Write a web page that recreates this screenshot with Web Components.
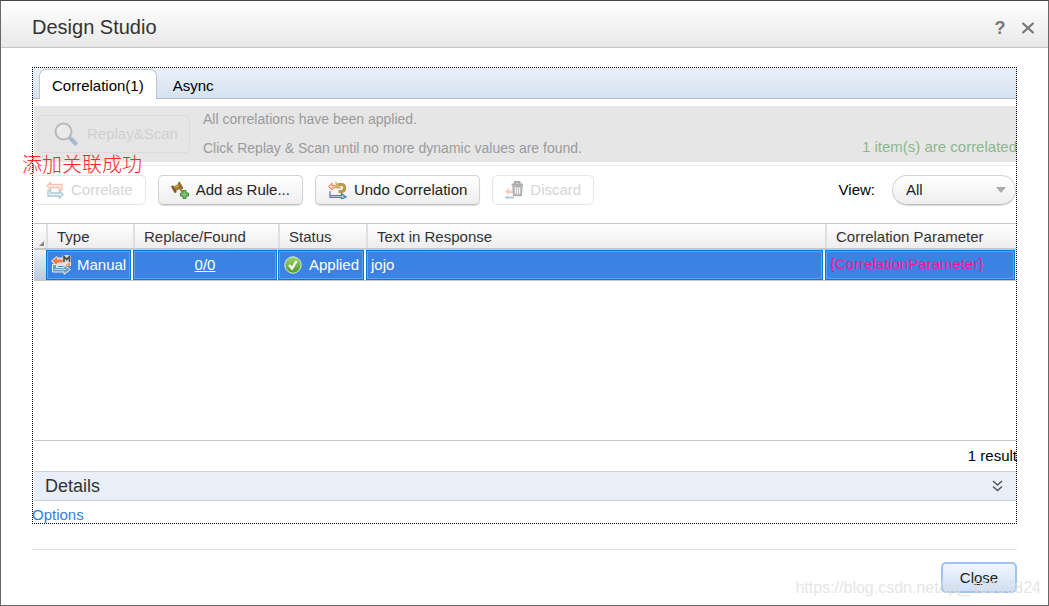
<!DOCTYPE html>
<html lang="en">
<head>
<meta charset="utf-8">
<title>Design Studio</title>
<style>
html{height:100%}
body{margin:0;min-height:100%;display:flex;flex-direction:column;font:15px/20px "Liberation Sans",Arial,sans-serif;color:#000;background:#fff}
ds-dialog{flex:1}
</style>
</head>
<body>
<ds-dialog heading="Design Studio">
  <ds-panel>
    <ds-tabs slot="tabs"></ds-tabs>
    <ds-banner></ds-banner>
    <ds-toolbar>
      <ds-button icon="correlate" disabled>Correlate</ds-button>
      <ds-button icon="rule">Add as Rule...</ds-button>
      <ds-button icon="undo">Undo Correlation</ds-button>
      <ds-button icon="discard" disabled>Discard</ds-button>
      <ds-view slot="end"></ds-view>
    </ds-toolbar>
    <ds-grid></ds-grid>
    <ds-details>Details</ds-details>
    <ds-options></ds-options>
  </ds-panel>
  <ds-note slot="note">添加关联成功</ds-note>
  <ds-button slot="actions" primary>Cl<u>o</u>se</ds-button>
  <ds-watermark slot="mark">https://blog.csdn.net/qq_40955824</ds-watermark>
</ds-dialog>

<script>
const define = (name, html, setup) => {
  const tpl = document.createElement('template');
  tpl.innerHTML = html;
  customElements.define(name, class extends HTMLElement {
    constructor() {
      super();
      this.attachShadow({mode: 'open'}).append(tpl.content.cloneNode(true));
    }
    connectedCallback() { if (setup) setup(this, this.shadowRoot); }
  });
};

const icons = {
  correlate: `<svg width="18" height="18" viewBox="0 0 18 18"><path d="M1 5 4.500 1.500V3.500H16V9H13.500V6.500H4.500v2z" fill="#fde3d4" stroke="#ee6a2c" stroke-width="1.300"/><path d="M17 13.500 13.500 17V15H2V9.500H4.500V12h9v-2z" fill="#d5e6ee" stroke="#2f7fa5" stroke-width="1.300"/></svg>`,
  rule: `<svg width="18" height="18" viewBox="0 0 18 18"><path d="M8.500 7l3 4" stroke="#a07c3c" stroke-width="2"/><g transform="rotate(-28 6 6)"><rect x="2.500" y="4" width="7" height="5" fill="#a37b34"/><rect x="1" y="2.500" width="2.500" height="8" rx="1" fill="#7f5c22"/><rect x="8.500" y="2.500" width="2.500" height="8" rx="1" fill="#8f6b2c"/><path d="M3.500 5.500h5" stroke="#cfae6c"/></g><path d="M12 9.500h3v2.500h2.500v3H15v2.500h-3V15H9.500v-3H12z" fill="#7fc268" stroke="#3b8a38" stroke-width="1"/></svg>`,
  undo: `<svg width="19" height="18" viewBox="0 0 19 18"><path d="M.5 5.500 4 2v2.500h3V7H4v2z" fill="#fbd3c0" stroke="#f0804c"/><path d="M2 10v4.500h11.500v-2l4.500 3.500-4.500 2v-1.500H2z" fill="#a9cbdc" stroke="#3f86a8" stroke-width="1.200"/><path d="M10 3.500h3.500c4 0 4.500 6.500 0 7H10.500" fill="none" stroke="#b89a4c" stroke-width="3"/><path d="M7.500 0v7.500h6z" fill="#cdb26c"/></svg>`,
  discard: `<svg width="18" height="18" viewBox="0 0 18 18"><path d="M0 10.500 4 7v2.500h4v2.500H4v2.500z" fill="#f28a58"/><path d="M1.500 15v1.500H9" fill="none" stroke="#3f86a8" stroke-width="2"/><path d="M6.500 3.500H18M10 3V1h4.500v2" fill="none" stroke="#333" stroke-width="2"/><path d="M8 5h9l-.8 9.500H8.800z" fill="#777" stroke="#333" stroke-width="1.400"/><path d="M10.500 6.500v6M12.500 6.500v6M14.500 6.500v6" stroke="#ddd"/></svg>`,
  search: `<svg width="26" height="26" viewBox="0 0 26 26"><path d="M17 17l5.500 5.500" stroke="#4b77a8" stroke-width="4" stroke-linecap="round"/><circle cx="10.500" cy="10.500" r="8" fill="#f2f2f2" stroke="#777" stroke-width="2"/><path d="M5.500 10a6 6 0 0 1 5-5" fill="none" stroke="#fff" stroke-width="2"/></svg>`,
  manual: `<svg width="20" height="20" viewBox="0 0 20 20"><path d="M0 6 5.500 1 7 2.500h13V11H7v1H5.500z" fill="#e6dfdc"/><path d="M1.500 6 6 2V4.500h6V7.500H6v3z" fill="#ef7a41"/><path d="M1.500 9.500v7.500H13v2.500l6.500-5L13 10v2.500H5.500v-3z" fill="#6f9fba" stroke="#e4edf2"/><path d="M3.500 14.500H15" stroke="#b4d3e0"/><rect x="11.500" y="0" width="8.500" height="7.500" fill="#d9d5d2"/><path d="M13 7V1.500l2.800 3 2.700-3V7" fill="none" stroke="#4a4a4a" stroke-width="1.600"/><path d="M18 8v2.500h-3" fill="none" stroke="#f29a68" stroke-width="2"/></svg>`,
  check: `<svg width="18" height="18" viewBox="0 0 18 18"><defs><linearGradient id="g" x2="0" y2="1"><stop stop-color="#a0d26c"/><stop offset="1" stop-color="#4f9a2d"/></linearGradient></defs><circle cx="9" cy="9" r="8.200" fill="url(#g)" stroke="#d9efc9"/><path d="M5 9l3 3.500 4.500-7.500" fill="none" stroke="#fff" stroke-width="2.400"/></svg>`
};
define('ds-icon', `<style>:host{display:inline-flex;flex:none}</style>`, (el, root) => {
  if (!root.querySelector('svg')) root.innerHTML += icons[el.getAttribute('name')];
});

define('ds-dialog', `<style>
:host{display:flex;flex-direction:column;box-sizing:border-box;border:1px solid #686868;border-top-color:#444;position:relative;overflow:hidden}
header{display:flex;align-items:center;height:46px;padding:0 12px 0 31px;background:linear-gradient(#fff,#e8e8e8);border-bottom:1px solid #c6c6c6}
h1{font-size:20px;line-height:24px;font-weight:400;margin:0;padding-top:6px;flex:1;color:#333}
.tools{display:flex;gap:12px;padding-top:7px}
.tools button{border:0;padding:0;background:none;color:#777;font:bold 18px/16px "Liberation Sans",sans-serif;width:16px;height:16px;display:flex;align-items:center;justify-content:center}
main{flex:1;display:flex;flex-direction:column;padding:19px 31px 0}
footer{margin:25px 31px 0;border-top:1px solid #e3e3e3;padding:12px 0;display:flex;justify-content:flex-end}
</style>
<header><h1></h1><div class="tools"><button aria-label="Help">?</button><button aria-label="Close window"><svg width="14" height="14" viewBox="0 0 14 14"><path d="M1.500 2l11 10M12.500 2l-11 10" stroke="#777" stroke-width="2.300"/></svg></button></div></header>
<main><slot></slot></main><footer><slot name="actions"></slot></footer><slot name="note"></slot><slot name="mark"></slot>`,
(el, root) => { root.querySelector('h1').textContent = el.getAttribute('heading'); });

define('ds-panel', `<style>
:host{display:flex;flex-direction:column;flex:1;padding:1px 0;outline:1px dotted #000;outline-offset:-1px}
::slotted(ds-grid){flex:1}
</style><slot name="tabs"></slot><slot></slot>`);

define('ds-tabs', `<style>
:host{display:flex;height:30px;padding:0 0 0 7px;background:linear-gradient(#e9f0f9,#d6e2f0);border-bottom:1px solid #b6bcc4;margin-bottom:7px}
button{font:inherit;color:#000;background:none;border:0;padding:5px 16px 0}
button[aria-selected=true]{background:#fff;border:1px solid #c0c5cb;border-bottom:0;border-radius:7px 7px 0 0;margin:1px 0 -1px;padding:3px 12px 0}
</style><button role="tab" aria-selected="true">Correlation(1)</button><button role="tab" aria-selected="false">Async</button>`);

define('ds-banner', `<style>
:host{display:flex;height:56px;background:#e6e6e6;margin:0 0 3px 2px;color:#9b9b9b}
.scan{margin:9px 0 0 4px}
.msg{flex:1;padding:3px 0 0 13px;font-size:14px}
p{margin:0 0 9px}
.count{align-self:flex-end;color:#8db78d;padding-bottom:5px}
</style><ds-button class="scan" large disabled icon="search">Replay&amp;Scan</ds-button>
<div class="msg"><p>All correlations have been applied.</p><p>Click Replay &amp; Scan until no more dynamic values are found.</p></div><div class="count">1 item(s) are correlated</div>`);

define('ds-button', `<style>
:host{display:block}
button{box-sizing:border-box;height:30px;display:flex;align-items:center;gap:7px;font:inherit;color:#222;padding:0 12px;border:1px solid #d2d2d2;border-bottom-color:#c0c0c0;border-radius:5px;background:linear-gradient(#fff,#eee);box-shadow:0 1px 1px #ddd;white-space:nowrap}
button:disabled{color:#d5d5d5;background:#fff;border-color:#e6e6e6;box-shadow:none}
button:disabled ds-icon{opacity:.4}
:host([large]) button{height:38px;width:152px;color:#d0d0d0;background:#e6e6e6;border-color:#dadada;gap:8px;padding:0 12px 0 14px}
:host([primary]) button{height:31px;width:76px;justify-content:center;border:2px solid #9fc3f3;background:linear-gradient(#f1f6fd,#cfe0f8);box-shadow:none}
</style><button><span><slot></slot></span></button>`, (el, root) => {
  const b = root.querySelector('button');
  b.disabled = el.hasAttribute('disabled');
  if (el.hasAttribute('icon') && !b.querySelector('ds-icon')) {
    const i = document.createElement('ds-icon');
    i.setAttribute('name', el.getAttribute('icon'));
    b.prepend(i);
  }
});

define('ds-toolbar', `<style>
:host{display:flex;align-items:center;gap:12px;border-top:1px solid #ebebeb;margin:0 1px;padding:9px 0 18px}
.end{margin-left:auto}
</style><slot></slot><div class="end"><slot name="end"></slot></div>`);

define('ds-view', `<style>
:host{display:flex;align-items:center;gap:17px}
.box{position:relative;display:flex}
select{appearance:none;box-sizing:border-box;width:124px;height:30px;border:1px solid #d4d4d4;border-bottom-color:#bbb;border-radius:15px;padding:0 30px 0 13px;font:inherit;color:#222;background:linear-gradient(#fff,#eee);box-shadow:0 1px 1px #ddd}
svg{position:absolute;right:10px;top:12px;pointer-events:none}
</style><label for="view">View:</label><div class="box"><select id="view"><option>All</option></select><svg width="10" height="6"><path d="M0 0h10L5 6z" fill="#aaa"/></svg></div>`);

define('ds-grid', `<style>
:host{display:flex;flex-direction:column}
.area{flex:1;min-height:120px;border:solid #c8c8c8;border-width:1px 0;margin:0 1px 0 2px}
table{width:100%;table-layout:fixed;border-collapse:separate;border-spacing:0}
th,td{padding:0;text-align:left;font-weight:400}
th{height:24px;background:linear-gradient(#fff,#ededed);border-bottom:2px solid #c8c8c8;color:#333}
th span{display:block;border-left:2px solid #e0e0e0;padding-left:9px;height:24px;line-height:26px}
.c0{width:12px}.c1{width:87px}.c2{width:145px}.c3{width:88px}.c5{width:191px}
.corner{text-align:right;vertical-align:bottom;font-size:0;line-height:0}
td{height:30px;border-bottom:1px solid #c8c8c8}
td.row{background:linear-gradient(#edf1f7,#b9cae2)}
td div{box-sizing:border-box;height:30px;margin-right:2px;background:#3a83e5;border:1px solid #0078d7;box-shadow:inset 0 0 0 1px #64a0ec;color:#fff;display:flex;align-items:center;gap:6px;padding:0 4px}
td:nth-child(3) div,td:last-child div{margin-right:1px}
td:nth-child(3) div{justify-content:center}
td:nth-child(4) div{gap:7px;padding-left:5px}
td a{color:#fff}
td:last-child div{color:#ff1493;padding-bottom:3px}
.result{text-align:right;height:30px;line-height:30px}
</style>
<div class="area"><table><colgroup><col class="c0"><col class="c1"><col class="c2"><col class="c3"><col><col class="c5"></colgroup>
<thead><tr><th class="corner"><svg width="9" height="8"><path d="M2 6H7V1z" fill="#888"/></svg></th><th><span>Type</span></th><th><span>Replace/Found</span></th><th><span>Status</span></th><th><span>Text in Response</span></th><th><span>Correlation Parameter</span></th></tr></thead>
<tbody><tr><td class="row"></td><td><div><ds-icon name="manual"></ds-icon>Manual</div></td><td><div><a href="#">0/0</a></div></td><td><div><ds-icon name="check"></ds-icon>Applied</div></td><td><div>jojo</div></td><td><div>{CorrelationParameter}</div></td></tr></tbody></table></div>
<div class="result">1 result</div>`);

define('ds-details', `<style>
:host{display:block;margin:0 1px 0 2px}
button{box-sizing:border-box;width:100%;height:30px;display:flex;align-items:center;justify-content:space-between;padding:0 13px 0 11px;border:solid #cdd1d6;border-width:1px 0;background:#e8eff8;font:18px/20px "Liberation Sans",sans-serif;color:#333}
</style><button aria-expanded="false"><span><slot></slot></span><svg width="11" height="12" viewBox="0 0 11 12"><path d="M1 1l4.500 4L10 1M1 6.500l4.500 4 4.500-4" fill="none" stroke="#555" stroke-width="1.500"/></svg></button>`);

define('ds-options', `<style>:host{display:block;height:22px;padding-top:5px;box-sizing:border-box}a{display:block;line-height:18px;color:#2e7fe6;text-decoration:none}</style><a href="#">Options</a>`);
define('ds-note', `<style>:host{position:absolute;left:21px;top:151px;font:20px/24px "Noto Sans CJK SC",sans-serif;font-weight:300;color:#f8282a;white-space:nowrap}</style><slot></slot>`);
define('ds-watermark', `<style>:host{position:absolute;right:7px;bottom:7px;font:16px/20px "Liberation Sans",sans-serif;color:rgba(222,222,222,.8);white-space:nowrap;pointer-events:none}</style><slot></slot>`);
</script>
</body>
</html>
